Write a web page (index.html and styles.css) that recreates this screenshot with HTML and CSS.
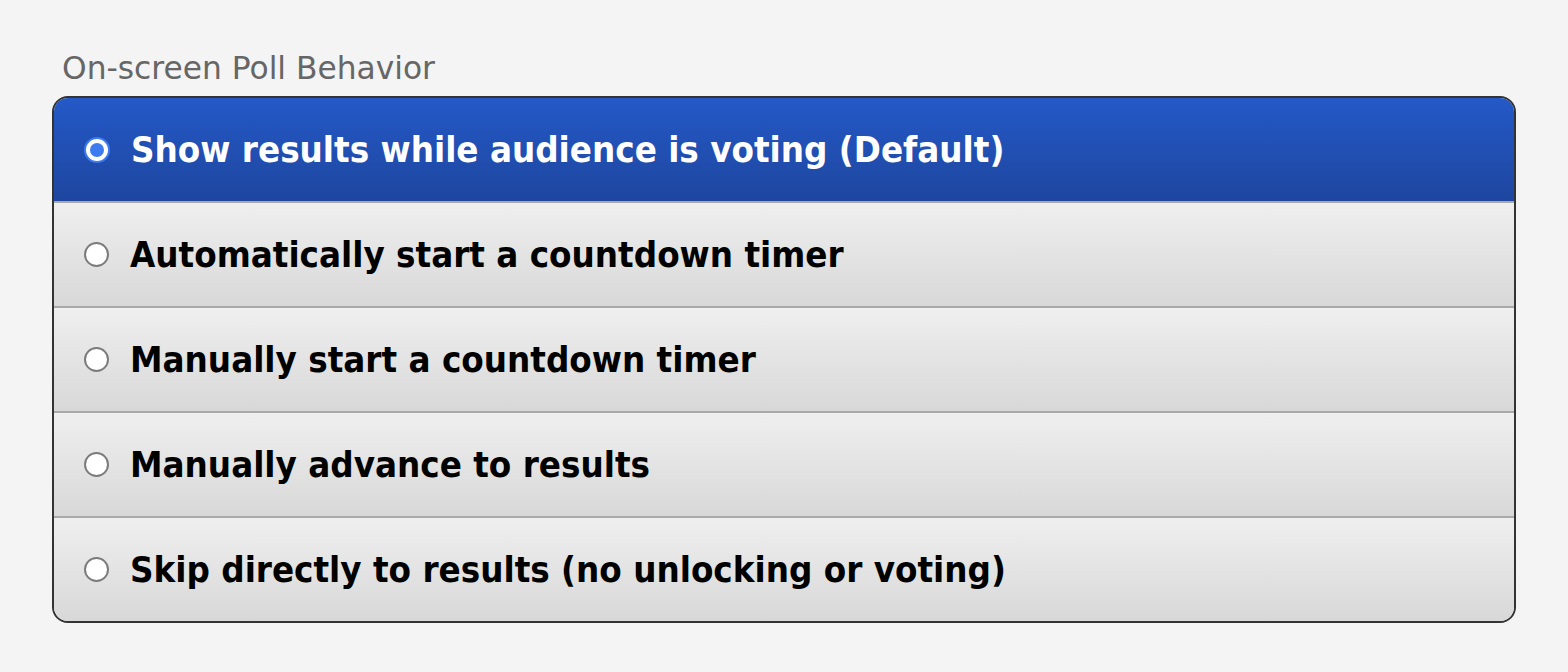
FILE: index.html
```html
<!DOCTYPE html>
<html lang="en">
<head>
    <meta charset="UTF-8">
    <meta name="viewport" content="width=device-width, initial-scale=1.0">
    <title>On-screen Poll Behavior</title>
    <link rel="stylesheet" href="styles.css">
</head>
<body>
    <div class="settings">
        <h2 class="group-title">On-screen Poll Behavior</h2>

        <div class="options">
            <label class="option selected">
                <input type="radio" name="behavior" value="show" checked>
                <span>Show results while audience is voting (Default)</span>
            </label>
            <label class="option">
                <input type="radio" name="behavior" value="auto-timer">
                <span>Automatically start a countdown timer</span>
            </label>
            <label class="option">
                <input type="radio" name="behavior" value="manual-timer">
                <span>Manually start a countdown timer</span>
            </label>
            <label class="option">
                <input type="radio" name="behavior" value="manual-advance">
                <span>Manually advance to results</span>
            </label>
            <label class="option">
                <input type="radio" name="behavior" value="skip">
                <span>Skip directly to results (no unlocking or voting)</span>
            </label>
        </div>
    </div>
</body>
</html>
```

FILE: styles.css
```css
body {
    margin: 0;
    padding: 0;
    background-color: #f4f4f4;
    font-family: "DejaVu Sans", Verdana, sans-serif;
}
.settings {
    padding: 50px 0 0 52px;
    width: 1464px;
}
.group-title {
    margin: 0 0 10px 10px;
    font-size: 31.3px;
    line-height: 36px;
    font-weight: normal;
    color: #666;
}
.options {
    border: 2px solid #333;
    border-radius: 16px;
    overflow: hidden;
}
.option {
    display: flex;
    align-items: center;
    gap: 21px;
    height: 103px;
    padding-left: 30px;
    background: linear-gradient(#efefef, #d8d8d8);
    font-family: "DejaVu Sans Condensed", "DejaVu Sans", sans-serif;
    font-weight: bold;
    font-size: 36.35px;
    color: #000;
    cursor: pointer;
}
.option + .option {
    border-top: 2px solid #a9a9a9;
}
.option.selected {
    background: linear-gradient(#2459c7, #1e469f);
    color: #fff;
}
.option input {
    appearance: none;
    -webkit-appearance: none;
    box-sizing: border-box;
    width: 25px;
    height: 25px;
    margin: 0;
    flex-shrink: 0;
    border: 2px solid #7c7c7c;
    border-radius: 50%;
    background: #fff;
    cursor: pointer;
}
.option input:checked {
    width: 22px;
    height: 22px;
    margin: 0 2px;
    border: 4px solid #fff;
    background: #3c7cf0;
    box-shadow: 0 0 0 2px #3c7cf0;
}
```
